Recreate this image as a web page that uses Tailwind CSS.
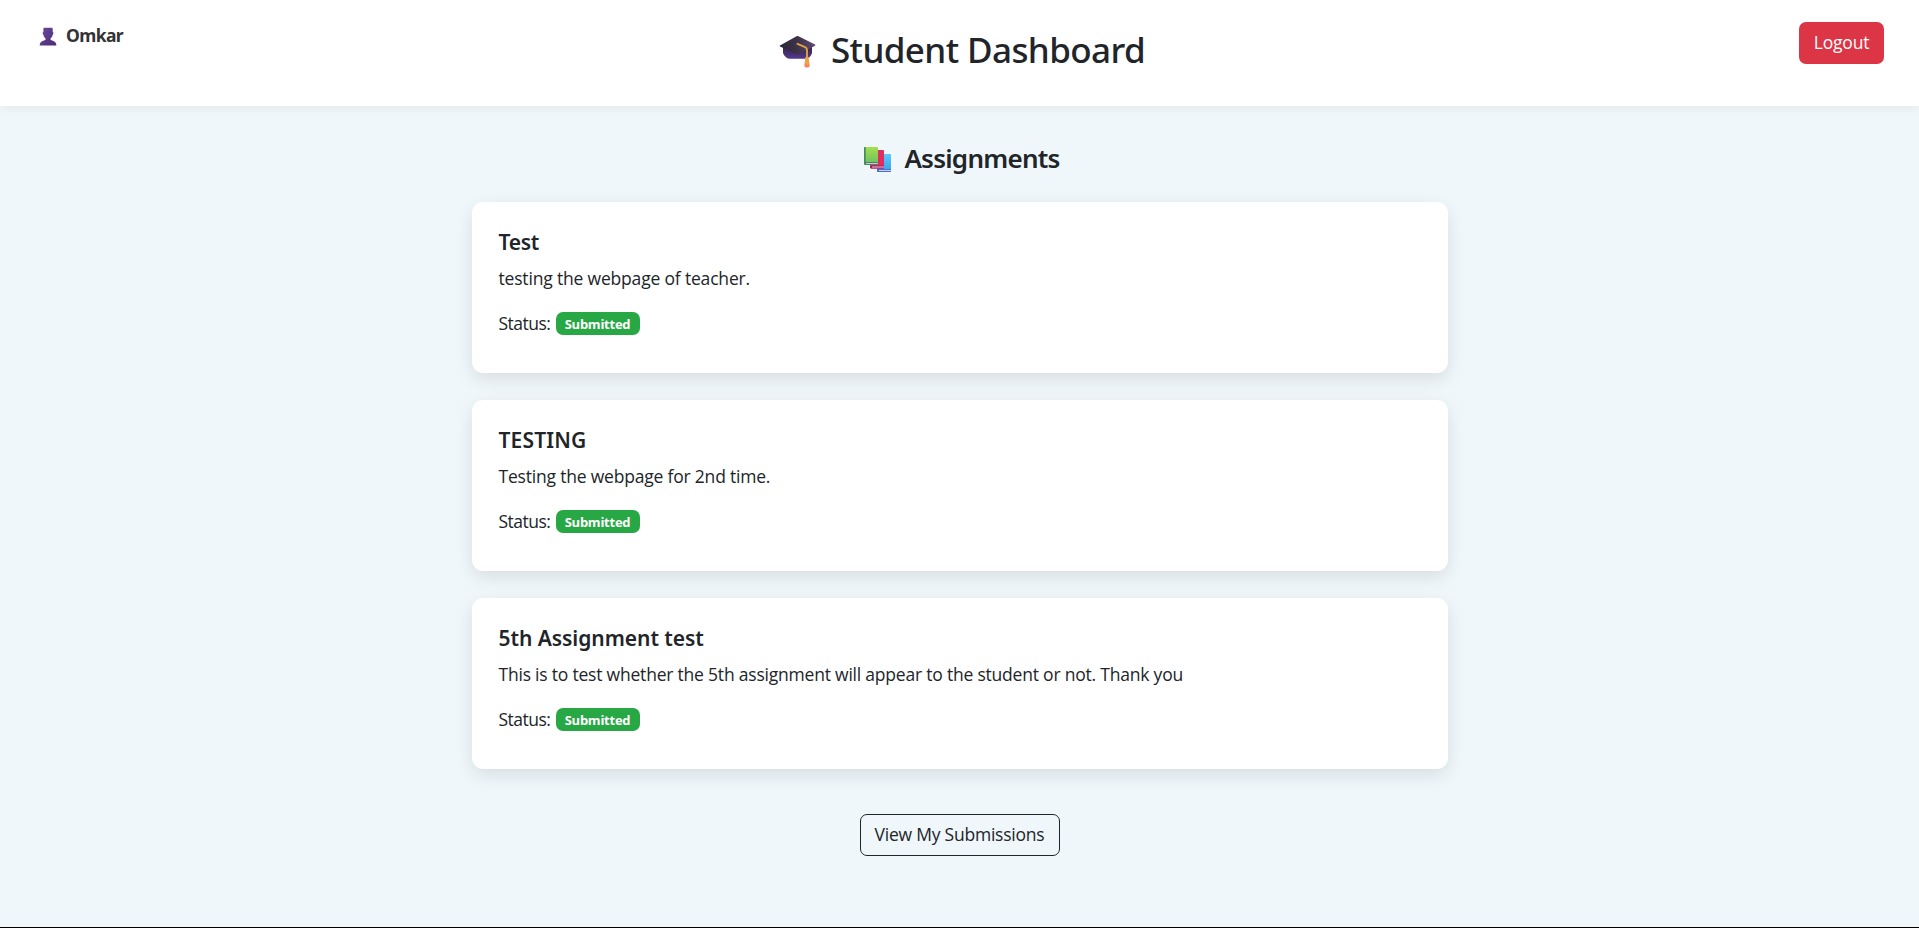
<!DOCTYPE html>
<html lang="en">
<head>
<meta charset="utf-8">
<title>Student Dashboard</title>
<script src="https://cdn.jsdelivr.net/npm/@tailwindcss/browser@4"></script>
</head>
<body class="h-screen overflow-hidden flex flex-col border-b border-black bg-[#eff7fa] text-[#212529] font-['Open_Sans','Noto_Sans',sans-serif] text-[17.5px] leading-[27px] tracking-[-0.23px]">
<header class="h-[106px] shrink-0 grid grid-cols-[1fr_auto_1fr] items-start bg-white px-[35px] shadow-[0_2px_11px_rgba(0,0,0,0.06)]">
  <div class="flex items-start pt-[22px] pl-[4px] text-[#333] font-bold text-[17.5px] tracking-[-0.6px] font-['Noto_Sans',sans-serif]">
    <svg class="w-[18px] h-[19px] mt-[4.5px] mr-[9px]" viewBox="0 0 18 19">
      <defs><linearGradient id="p" x1="0" y1="0" x2="1" y2="1"><stop offset="0" stop-color="#6b4a9c"/><stop offset="1" stop-color="#4a2a78"/></linearGradient></defs>
      <path fill="url(#p)" d="M5.200.8h7.600q.8 0 .9 1.200v2.800c.9.100.9 2.600 0 2.900-.3 1.700-1.200 2.800-2.100 3.500v1.600c.4.900 5.700.8 5.800 5.700H.7c.1-4.900 5.400-4.800 5.800-5.700v-1.600c-.9-.7-1.800-1.800-2.100-3.500-.9-.3-.9-2.800 0-2.900V2q0-1.200.8-1.200Z"/>
    </svg>
    <span>Omkar</span>
  </div>
  <h1 class="flex items-start pt-[28px] pl-[5px] text-[35px] leading-[43px] font-medium tracking-[-0.6px] font-['Noto_Sans',sans-serif]">
    <svg class="w-[37px] h-[34px] mt-[7px] mr-[15px]" viewBox="0 0 37 34">
      <defs>
        <linearGradient id="h" x1="0" y1="0" x2="1" y2="0"><stop offset="0" stop-color="#2d2437"/><stop offset=".5" stop-color="#3d3348"/><stop offset="1" stop-color="#5c4a70"/></linearGradient>
        <linearGradient id="b" x1="0" y1="0" x2="0" y2="1"><stop offset="0" stop-color="#33244d"/><stop offset="1" stop-color="#56388c"/></linearGradient>
        <linearGradient id="t" x1="0" y1="0" x2="0" y2="1"><stop offset="0" stop-color="#e5a34a"/><stop offset=".6" stop-color="#f3a04c"/><stop offset="1" stop-color="#f8735f"/></linearGradient>
      </defs>
      <path fill="url(#b)" d="M4 12v6c1.500 3.500 4 5.800 7 5.800h15c3.500 0 6-2.500 7-5.800v-6z"/>
      <path fill="url(#h)" d="M17.500 1.200q1-.5 2 0L36 9.500q.9.600 0 1.200L20 19.300q-1.200.6-2.400 0L1 11.600q-.9-.6 0-1.200z"/>
      <path fill="none" stroke="#e2a043" stroke-width="1.900" stroke-linecap="round" stroke-linejoin="round" d="m18.500 8.800 7.600 3.300q1.900.9 1.900 3v8"/>
      <path fill="url(#t)" d="M28 21.500c1.300 0 2 .9 1.800 2.200l.9 6.300c.2 1.700-.9 2.500-2.700 2.500s-2.900-.8-2.700-2.500l.9-6.300c-.2-1.300.5-2.200 1.800-2.200Z"/>
    </svg>
    <span>Student Dashboard</span>
  </h1>
  <div class="flex justify-end pt-[22px]">
    <button class="w-[85px] h-[42px] pb-[2px] rounded-[7px] bg-[#dc3545] text-white tracking-[-0.2px]">Logout</button>
  </div>
</header>
<main class="w-[976px] mx-auto flex flex-col pt-[36px]">
  <h2 class="flex items-start justify-center pl-[5px] mb-[28px] text-[26px] leading-[32px] font-semibold tracking-[-0.75px] font-['Noto_Sans',sans-serif]">
    <svg class="w-[28px] h-[26px] mt-[5px] mr-[12px]" viewBox="0 0 28 26">
      <defs>
        <linearGradient id="g" x1="0" y1="0" x2="0" y2="1"><stop offset="0" stop-color="#a4df4f"/><stop offset="1" stop-color="#67bd62"/></linearGradient>
        <linearGradient id="c" x1="0" y1="0" x2="0" y2="1"><stop offset="0" stop-color="#5bc9fa"/><stop offset="1" stop-color="#36a2ee"/></linearGradient>
      </defs>
      <path fill="url(#c)" d="M13 7h13q1 0 1 1v17H14q-1 0-1-1z"/>
      <path fill="#4a6fd0" d="M13 22h14v3H14q-1 0-1-1z"/><path fill="#c8d0fa" d="M15 23h12v1H15z"/>
      <path fill="#df2d61" d="M6 3h13q1 0 1 1v17.500H7.500Q6 21.500 6 20z"/>
      <path fill="#a91d58" d="M6 18.500h14v3H7.500Q6 21.500 6 20z"/><path fill="#f0bfdc" d="M8 19.500h12v1H8z"/>
      <path fill="url(#g)" d="M0 1q0-1 1-1h12q1 0 1 1v17H1.500Q0 18 0 16.500z"/>
      <path fill="#438b5b" d="M0 1q0-1 1-1h.7v15H14v3H1.500Q0 18 0 16.500z"/><path fill="#ccc5e6" d="M2 16h12v1H2z"/>
    </svg>
    <span>Assignments</span>
  </h2>
  <div class="flex flex-col gap-[27px]">
    <article class="h-[171px] rounded-[11px] bg-white p-[27px] shadow-[0_6px_18px_rgba(0,0,0,0.1)]">
      <h3 class="mb-[9px] text-[21px] leading-[27px] font-semibold tracking-[-0.25px] font-['Noto_Sans',sans-serif]">Test</h3>
      <p class="mb-[18px] tracking-[-0.18px]">testing the webpage of teacher.</p>
      <p class="flex items-start"><span class="w-[57px] tracking-[-0.5px]">Status:</span><span class="mt-[2px] w-[84px] h-[23px] rounded-[7px] bg-[#28a745] text-center text-[13px] leading-[24px] font-bold text-white tracking-[-0.25px]">Submitted</span></p>
    </article>
    <article class="h-[171px] rounded-[11px] bg-white p-[27px] shadow-[0_6px_18px_rgba(0,0,0,0.1)]">
      <h3 class="mb-[9px] text-[21px] leading-[27px] font-semibold tracking-[0.15px] font-['Noto_Sans',sans-serif]">TESTING</h3>
      <p class="mb-[18px] tracking-[-0.2px]">Testing the webpage for 2nd time.</p>
      <p class="flex items-start"><span class="w-[57px] tracking-[-0.5px]">Status:</span><span class="mt-[2px] w-[84px] h-[23px] rounded-[7px] bg-[#28a745] text-center text-[13px] leading-[24px] font-bold text-white tracking-[-0.25px]">Submitted</span></p>
    </article>
    <article class="h-[171px] rounded-[11px] bg-white p-[27px] shadow-[0_6px_18px_rgba(0,0,0,0.1)]">
      <h3 class="mb-[9px] text-[21px] leading-[27px] font-semibold tracking-[-0.05px] font-['Noto_Sans',sans-serif]">5th Assignment test</h3>
      <p class="mb-[18px] tracking-[-0.21px]">This is to test whether the 5th assignment will appear to the student or not. Thank you</p>
      <p class="flex items-start"><span class="w-[57px] tracking-[-0.5px]">Status:</span><span class="mt-[2px] w-[84px] h-[23px] rounded-[7px] bg-[#28a745] text-center text-[13px] leading-[24px] font-bold text-white tracking-[-0.25px]">Submitted</span></p>
    </article>
  </div>
  <button class="mt-[45px] w-[200px] h-[42px] pb-px self-center rounded-[7px] border border-[#212529]">View My Submissions</button>
</main>
</body>
</html>
